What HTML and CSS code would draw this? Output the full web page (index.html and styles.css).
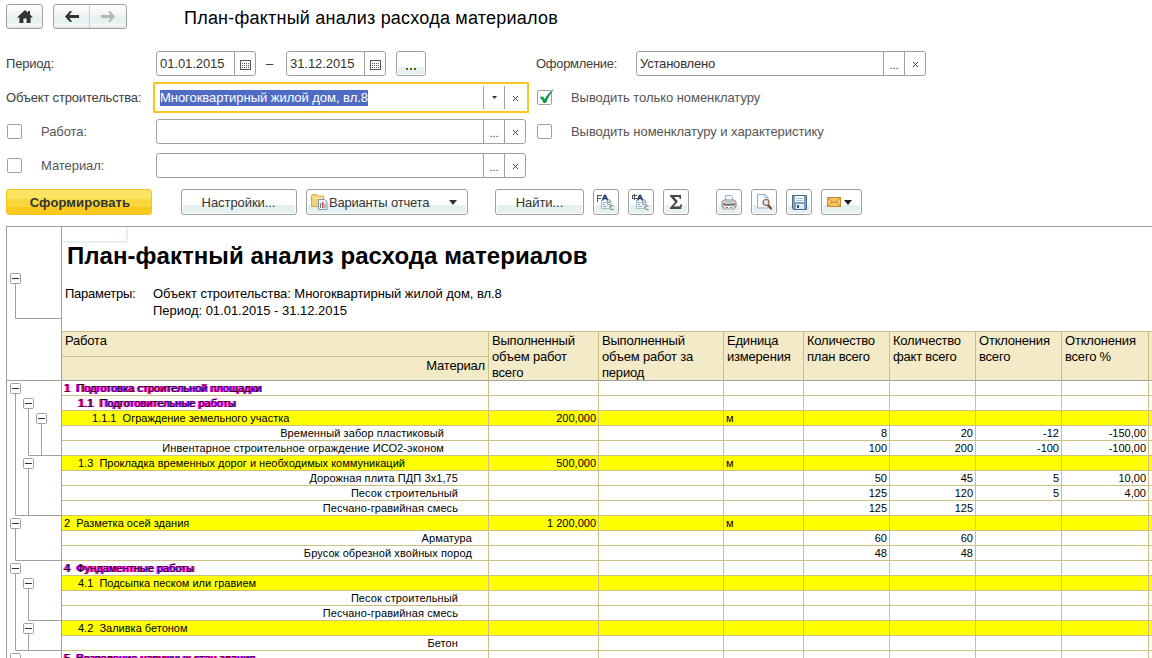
FILE: index.html
```
<!DOCTYPE html>
<html lang="ru">
  <head>
    <meta charset="UTF-8" />
    <meta name="viewport" content="width=device-width, initial-scale=1.0" />
    <title>План-фактный анализ расхода материалов</title>
    <link rel="stylesheet" href="styles.css">
  </head>
  <body>
    <header class="top">
      <div class="nav">
        <button class="nav-btn">
          <svg width="16" height="14" viewBox="0 0 16 14"><path d="M8 0 0 7.4h2.4V13h4V8.500h3.200V13h4V7.400H16L13 4.600V1h-2v1.800z" fill="#333" /></svg>
        </button>
      </div>
      <div class="nav">
        <button class="nav-btn">
          <svg width="14" height="11" viewBox="0 0 14 11"><path d="M0 5.500 5 0h2L4.500 4H14v3H4.500L7 11H5z" fill="#333" /></svg>
        </button>
        <button class="nav-btn">
          <svg width="14" height="11" viewBox="0 0 14 11"><path d="M14 5.500 9 0H7l2.500 4H0v3h9.500L7 11h2z" fill="#b5b5b5" /></svg>
        </button>
      </div>
      <h1 class="title">План-фактный анализ расхода материалов</h1>
    </header>

    <form class="filters">
      <div class="row">
        <span class="label wide">Период:</span>
        <div class="field date">
          <span class="value">01.01.2015</span>
          <span class="cell"><svg class="cal" width="11" height="10" viewBox="0 0 11 10"><rect x=".5" y=".5" width="10" height="9" fill="none" stroke="#555" /><path d="M2 3.500h7M2 5.500h7M2 7.500h7" stroke="#555" stroke-dasharray="1 1" /></svg></span>
        </div>
        <span class="dash">–</span>
        <div class="field date">
          <span class="value">31.12.2015</span>
          <span class="cell"><svg class="cal" width="11" height="10" viewBox="0 0 11 10"><rect x=".5" y=".5" width="10" height="9" fill="none" stroke="#555" /><path d="M2 3.500h7M2 5.500h7M2 7.500h7" stroke="#555" stroke-dasharray="1 1" /></svg></span>
        </div>
        <button class="btn period">
          <svg class="cal" width="10" height="2"><path d="M0 0h2v2H0zM4 0h2v2H4zM8 0h2v2H8z" fill="#6b5b00" /></svg>
        </button>
        <span class="label look">Оформление:</span>
        <div class="field appearance">
          <span class="value">Установлено</span>
          <span class="cell dots">...</span>
          <span class="cell"><svg class="x" width="5" height="5"><use href="#x" /></svg></span>
        </div>
      </div>

      <div class="row">
        <span class="label wide">Объект строительства:</span>
        <div class="field focused">
          <span class="value"><mark>Многоквартирный жилой дом, вл.8</mark></span>
          <span class="cell"><svg width="5" height="3"><path d="M0 0h5L2.500 3z" fill="#333" /></svg></span>
          <span class="cell"><svg class="x" width="5" height="5"><use href="#x" /></svg></span>
        </div>
        <span class="check right">
          <svg class="tick" width="16" height="16" viewBox="0 0 16 16"><path d="M1.500 8 5 7.500 6.500 10.200C9 6 12 2.500 16 0 12.500 4.500 10 9 8 14H5.500C4.800 12 3.500 10 1.500 8z" fill="#0a9a4c" /></svg>
        </span>
        <span class="label dim">Выводить только номенклатуру</span>
      </div>

      <div class="row">
        <span class="check"></span>
        <span class="label dim narrow">Работа:</span>
        <div class="field">
          <span class="value"></span>
          <span class="cell dots">...</span>
          <span class="cell"><svg class="x" width="5" height="5"><use href="#x" /></svg></span>
        </div>
        <span class="check right"></span>
        <span class="label dim">Выводить номенклатуру и характеристику</span>
      </div>

      <div class="row">
        <span class="check"></span>
        <span class="label dim narrow">Материал:</span>
        <div class="field">
          <span class="value"></span>
          <span class="cell dots">...</span>
          <span class="cell"><svg class="x" width="5" height="5" viewBox="0 0 5 5"><path id="x" d="M0 0h1v1H0zM4 0h1v1H4zM1 1h1v1H1zM3 1h1v1H3zM2 2h1v1H2zM1 3h1v1H1zM3 3h1v1H3zM0 4h1v1H0zM4 4h1v1H4z" fill="#444" /></svg></span>
        </div>
      </div>
    </form>

    <div class="toolbar">
      <button class="btn primary">Сформировать</button>
      <button class="btn settings">Настройки...</button>
      <button class="btn variants">
        <svg width="17" height="16" viewBox="0 0 17 16"><path d="M.5 12.500v-11l1-1h4l1 1.500h6v10.500z" fill="#f4d27c" stroke="#d9a94a" /><path d="M1.500 4h10" stroke="#fff1c0" /><path d="M7.500 5.500h6l2.500 2v8H7.500z" fill="#eef3f8" stroke="#8496ab" /><path d="M9 9h1v5H9z" fill="#5b86b8" /><path d="M11 8h1.500v6H11z" fill="#d9463b" /><path d="M13.500 10h1v4h-1z" fill="#5aa05a" /></svg>
        <span>Варианты отчета</span>
        <svg class="arrow" width="8" height="5"><path d="M0 0h8L4 5z" fill="#333" /></svg>
      </button>
      <button class="btn find">Найти...</button>
      <button class="btn icon">
        <svg width="18" height="17" viewBox="0 0 18 17"><path d="M4.500 6v8.500H12M5 4.500h6l3 3v6" fill="#e9f5fa" stroke="#9dc3d3" /><path d="M.5 1v7M0 1.500h5M0 4.500h4" fill="none" stroke="#555" /><path d="m5.500 6.500 2-5h1l2 5M6.500 4.500h3" fill="none" stroke="#173a63" stroke-width="1.500" /><path d="M10.500 6v4.500H13q1-1 0-2.200h-2.500H13q1-1 0-2.300z" fill="#fff" stroke="#929ba0" /><path d="M16.500 12q-3.500-1-3.500 1.500T16.500 15.500" fill="none" stroke="#858e93" stroke-width="1.300" /><path d="M6 8.500h3M6 10.500h2M6 12.500h4" stroke="#8fb0bf" /></svg>
      </button>
      <button class="btn icon">
        <svg width="18" height="17" viewBox="0 0 18 17"><path d="M4.500 6v8.500H12M5 4.500h6l3 3v6" fill="#e9f5fa" stroke="#9dc3d3" /><path d="M0 1.500h5M0 4.500h5M.5 1v4M2.500 0v6" fill="none" stroke="#555" /><path d="m5.500 6.500 2-5h1l2 5M6.500 4.500h3" fill="none" stroke="#173a63" stroke-width="1.500" /><path d="M10.500 6v4.500H13q1-1 0-2.200h-2.500H13q1-1 0-2.300z" fill="#fff" stroke="#929ba0" /><path d="M16.500 12q-3.500-1-3.500 1.500T16.500 15.500" fill="none" stroke="#858e93" stroke-width="1.300" /><path d="M6 8.500h3M6 10.500h2M6 12.500h4" stroke="#8fb0bf" /></svg>
      </button>
      <button class="btn icon">
        <svg width="12" height="14" viewBox="0 0 12 14"><path d="M0 0h11v4h-1L9 2H4l4 4.500L3.500 11.500H9.500L11 9h1l-.8 5H0v-1l5-6L0 1z" fill="#484848" /></svg>
      </button>
      <button class="btn icon print">
        <svg width="16" height="15" viewBox="0 0 16 15"><path d="M4.500 7V.5h6l1 1V7z" fill="#f2f8fd" stroke="#9ab4cc" /><path d="M1 6.500 3 5h10l2 1.500V11l-1.500 2.500h-11L1 11z" fill="#d6d2cd" stroke="#8b8782" /><path d="M4 5.500h8v3H4z" fill="#b9c9d9" /><path d="M2 9.500h12" stroke="#6d6d6d" /><path d="M2 8h2v1H2zM12 8h2v1h-2z" fill="#d98d5b" /><path d="M3.500 10.500h9l1 3.500h-11z" fill="#fff" stroke="#999" /><path d="M5 12h2v1H5z" fill="#c9503e" /><path d="M9 12h2v1H9z" fill="#59a" /></svg>
      </button>
      <button class="btn icon">
        <svg width="15" height="16" viewBox="0 0 15 16"><path d="M.5.500h7.500l3 3v10.500H.5z" fill="#f7fafd" stroke="#8fb0cf" /><path d="M8 .5v3h3" fill="#d5e5f2" stroke="#8fb0cf" /><path d="m11 11 3 3.500" stroke="#7d3d22" stroke-width="2" stroke-linecap="round" /><circle cx="9" cy="8.500" r="3" fill="#dbe8f2" stroke="#8a5a40" stroke-width="1.200" /></svg>
      </button>
      <button class="btn icon">
        <svg width="15" height="15" viewBox="0 0 15 15"><path d="M.5.500h14v14h-13l-1-1z" fill="#7d9fc0" stroke="#45688c" /><path d="M3 1h9v6H3z" fill="#f5fafd" /><path d="M4 3.500h7M4 5.500h7" stroke="#a9c1d4" /><path d="M4 9h8v5H4z" fill="#e3e9ee" /><path d="M5 10h2v3H5z" fill="#375a7c" /></svg>
      </button>
      <button class="btn mail">
        <svg width="14" height="10" viewBox="0 0 14 10"><rect x=".5" y=".5" width="13" height="9" fill="#fbc562" stroke="#c98a2c" /><path d="m1 1 6 5 6-5M1 9l4.500-4.500M13 9 8.500 4.500" fill="none" stroke="#c98a2c" /></svg>
        <svg width="8" height="5"><path d="M0 0h8L4 5z" fill="#222" /></svg>
      </button>
    </div>

    <main class="report">
      <!-- group outline, same coordinates as the page -->
      <svg class="outline" width="54" height="432" viewBox="7 227 54 432">
        <g fill="none" stroke="#a0a0a0">
          <path d="M15.500 284v34.500H61M7 380.500h54" />
          <path d="M15.500 393v122.500H61M28.500 408v47.500H61M41.500 423v32M28.500 468v47" />
          <path d="M15.500 528v32.500H61M15.500 573v77.500H61M28.500 588v32.500H61M28.500 633v17" />
        </g>
        <g fill="#fff" stroke="#a0a0a0">
          <rect x="10.500" y="273.500" width="10" height="10" rx="1" />
          <rect x="10.500" y="383.500" width="10" height="10" rx="1" />
          <rect x="23.500" y="398.500" width="10" height="10" rx="1" />
          <rect x="36.500" y="413.500" width="10" height="10" rx="1" />
          <rect x="23.500" y="458.500" width="10" height="10" rx="1" />
          <rect x="10.500" y="518.500" width="10" height="10" rx="1" />
          <rect x="10.500" y="563.500" width="10" height="10" rx="1" />
          <rect x="23.500" y="578.500" width="10" height="10" rx="1" />
          <rect x="23.500" y="623.500" width="10" height="10" rx="1" />
          <rect x="10.500" y="653.500" width="10" height="10" rx="1" />
        </g>
        <path d="M12 278.500h7M12 388.500h7M25 403.500h7M38 418.500h7M25 463.500h7M12 523.500h7M12 568.500h7M25 583.500h7M25 628.500h7" stroke="#333" />
      </svg>

      <div class="sheet">
        <div class="cursor"></div>
        <h2 class="report-title">План-фактный анализ расхода материалов</h2>
        <div class="params">
          <span class="params-label">Параметры:</span>
          <div>
            <div>Объект строительства: Многоквартирный жилой дом, вл.8</div>
            <div class="params-period">Период: 01.01.2015 - 31.12.2015</div>
          </div>
        </div>

        <table class="grid">
          <colgroup>
            <col class="c-name"><col class="c-total"><col class="c-period"><col class="c-unit">
            <col class="c-num"><col class="c-num"><col class="c-num"><col class="c-pct"><col class="c-rest">
          </colgroup>
          <thead>
            <tr class="h1">
              <th>Работа</th>
              <th rowspan="2">Выполненный<br>объем работ<br>всего</th>
              <th rowspan="2">Выполненный<br>объем работ за<br>период</th>
              <th rowspan="2">Единица<br>измерения</th>
              <th rowspan="2">Количество<br>план всего</th>
              <th rowspan="2">Количество<br>факт всего</th>
              <th rowspan="2">Отклонения<br>всего</th>
              <th rowspan="2">Отклонения<br>всего %</th>
              <th rowspan="2"></th>
            </tr>
            <tr class="h2"><th class="material">Материал</th></tr>
          </thead>
          <tbody>
            <tr class="group"><td>1  Подготовка строительной площадки</td><td></td><td></td><td></td><td></td><td></td><td></td><td></td><td></td></tr>
            <tr class="group l1"><td>1.1  Подготовительные работы</td><td></td><td></td><td></td><td></td><td></td><td></td><td></td><td></td></tr>
            <tr class="work l2"><td>1.1.1  Ограждение земельного участка</td><td>200,000</td><td></td><td>м</td><td></td><td></td><td></td><td></td><td></td></tr>
            <tr class="item r3"><td>Временный забор пластиковый</td><td></td><td></td><td></td><td>8</td><td>20</td><td>-12</td><td>-150,00</td><td></td></tr>
            <tr class="item r3"><td>Инвентарное строительное ограждение ИСО2-эконом</td><td></td><td></td><td></td><td>100</td><td>200</td><td>-100</td><td>-100,00</td><td></td></tr>
            <tr class="work l1"><td>1.3  Прокладка временных дорог и необходимых коммуникаций</td><td>500,000</td><td></td><td>м</td><td></td><td></td><td></td><td></td><td></td></tr>
            <tr class="item r2"><td>Дорожная плита ПДП 3х1,75</td><td></td><td></td><td></td><td>50</td><td>45</td><td>5</td><td>10,00</td><td></td></tr>
            <tr class="item r2"><td>Песок строительный</td><td></td><td></td><td></td><td>125</td><td>120</td><td>5</td><td>4,00</td><td></td></tr>
            <tr class="item r2"><td>Песчано-гравийная смесь</td><td></td><td></td><td></td><td>125</td><td>125</td><td></td><td></td><td></td></tr>
            <tr class="work"><td>2  Разметка осей здания</td><td>1 200,000</td><td></td><td>м</td><td></td><td></td><td></td><td></td><td></td></tr>
            <tr class="item r1"><td>Арматура</td><td></td><td></td><td></td><td>60</td><td>60</td><td></td><td></td><td></td></tr>
            <tr class="item r1"><td>Брусок обрезной хвойных пород</td><td></td><td></td><td></td><td>48</td><td>48</td><td></td><td></td><td></td></tr>
            <tr class="group"><td>4  Фундаментные работы</td><td></td><td></td><td></td><td></td><td></td><td></td><td></td><td></td></tr>
            <tr class="work l1"><td>4.1  Подсыпка песком или гравием</td><td></td><td></td><td></td><td></td><td></td><td></td><td></td><td></td></tr>
            <tr class="item r2"><td>Песок строительный</td><td></td><td></td><td></td><td></td><td></td><td></td><td></td><td></td></tr>
            <tr class="item r2"><td>Песчано-гравийная смесь</td><td></td><td></td><td></td><td></td><td></td><td></td><td></td><td></td></tr>
            <tr class="work l1"><td>4.2  Заливка бетоном</td><td></td><td></td><td></td><td></td><td></td><td></td><td></td><td></td></tr>
            <tr class="item r2"><td>Бетон</td><td></td><td></td><td></td><td></td><td></td><td></td><td></td><td></td></tr>
            <tr class="group"><td>5  Возведение наружных стен здания</td><td></td><td></td><td></td><td></td><td></td><td></td><td></td><td></td></tr>
          </tbody>
        </table>
      </div>
    </main>
  </body>
</html>
```
FILE: styles.css
```
:root {
  --line: #a0a0a0;
  --grid: #ccc085;
  --head: #f3ebc7;
  --tint: #e5f1f1;
}

* {
  box-sizing: border-box;
}
body {
  margin: 0;
  width: 1152px;
  height: 658px;
  overflow: hidden;
  background: #fff;
  color: #333;
  font-family: "Liberation Sans", Arial, sans-serif;
  font-size: 13px;
  letter-spacing: -0.06px;
}
svg {
  display: block;
  flex: none;
}
button {
  font: inherit;
  letter-spacing: inherit;
  color: inherit;
  padding: 0;
}

/* top line */
.top {
  display: flex;
  height: 51px;
  padding: 4px 0 0 6px;
}
.nav {
  display: flex;
  height: 25px;
  margin-right: 10px;
  border: 1px solid var(--line);
  border-radius: 3px;
  background: linear-gradient(#fff, #f0f0f0 12px, var(--tint) 12px, #e8f3f3 19px, #fff 19px, #e4e4e4);
}
.nav-btn {
  display: flex;
  align-items: center;
  justify-content: center;
  width: 35px;
  border: 0;
  background: none;
}
.nav-btn + .nav-btn {
  width: 37px;
  border-left: 1px solid #ccc;
}
.title {
  margin: 3px 0 0 47px;
  font-size: 18px;
  font-weight: normal;
  line-height: 22px;
  letter-spacing: 0.22px;
  color: #000;
}

/* filters */
.filters {
  padding-left: 6px;
}
.row {
  display: flex;
  align-items: center;
  height: 25px;
  margin-bottom: 9px;
}
.label {
  white-space: nowrap;
  color: #404040;
}
.label.wide {
  width: 150px;
  letter-spacing: -0.18px;
}
.label.dim {
  color: #555;
}
.label.narrow {
  width: 115px;
}
.label.look {
  width: 100px;
  margin-left: 110px;
  letter-spacing: -0.3px;
}
.field {
  display: flex;
  width: 370px;
  height: 25px;
  border: 1px solid var(--line);
  border-radius: 3px;
  background: #fff;
}
.field.date {
  width: 100px;
}
.field.appearance {
  width: 290px;
}
.field.focused {
  width: 376px;
  height: 31px;
  margin: 0 -3px;
  padding: 2px;
  border: 2px solid #f8c61e;
  border-radius: 0;
}
.value {
  flex: 1;
  padding-left: 3px;
  line-height: 23px;
  color: #333;
}
.appearance .value {
  letter-spacing: -0.2px;
}
mark {
  display: inline-block;
  height: 16px;
  line-height: 16px;
  background: #4f6bc4;
  color: #fff;
  letter-spacing: -0.04px;
}
.cell {
  display: flex;
  align-items: center;
  justify-content: center;
  width: 21px;
  border-left: 1px solid var(--line);
}
.cell.dots {
  padding-top: 3px;
  font-size: 11px;
  letter-spacing: 0;
}
.cell .x,
.cal {
  shape-rendering: crispEdges;
}
.cell .cal,
.cell .x {
  margin-top: 2px;
}
.dash {
  width: 30px;
  padding-right: 3px;
  text-align: center;
}
.check {
  width: 15px;
  height: 15px;
  margin: 0 19px 0 1px;
  border: 1px solid var(--line);
  border-radius: 2px;
}
.check.right {
  margin-left: 11px;
}
.tick {
  margin: -2px 0 0 0;
}

/* buttons */
.btn {
  display: flex;
  align-items: center;
  justify-content: center;
  height: 26px;
  border: 1px solid var(--line);
  border-radius: 3px;
  background: linear-gradient(#fff 15px, var(--tint) 15px);
  box-shadow: inset 0 0 0 1px #fff;
}
.btn.period {
  width: 30px;
  height: 25px;
  margin-left: 10px;
  padding-top: 10px;
}
.toolbar {
  display: flex;
  gap: 9px;
  padding: 2px 0 0 6px;
  height: 39px;
}
.btn.primary {
  width: 146px;
  margin-right: 20px;
  padding-left: 2px;
  border-color: #f6c51d;
  background: linear-gradient(#fbe565, #fae35f 9px, #f9d93f 9px, #f9d638 17px, #fac81c 17px, #fbcb22);
  box-shadow: none;
  font-weight: bold;
  letter-spacing: 0.12px;
}
.btn.settings {
  width: 116px;
  padding-right: 1px;
}
.btn.variants {
  width: 162px;
  margin-right: 18px;
  justify-content: flex-start;
  padding-left: 4px;
  letter-spacing: -0.2px;
}
.btn.variants span {
  margin-left: 1px;
}
.arrow {
  margin: 0 10px 0 auto;
}
.btn.find {
  width: 89px;
}
.btn.icon {
  width: 26px;
}
.btn.print {
  margin-left: 18px;
}
.btn.mail {
  width: 41px;
  gap: 3px;
  padding-right: 4px;
}

/* report */
.report {
  display: flex;
  width: 1146px;
  height: 432px;
  margin-left: 6px;
  border-top: 1px solid var(--line);
  border-left: 1px solid var(--line);
  overflow: hidden;
  color: #000;
}
.sheet {
  width: 1091px;
  border-left: 1px solid var(--line);
  overflow: hidden;
}
.cursor {
  width: 66px;
  height: 16px;
  border-right: 2px solid var(--tint);
  border-bottom: 2px solid var(--tint);
}
.report-title {
  margin: -1px 0 0 5px;
  font-size: 24px;
  line-height: 28px;
  letter-spacing: 0.04px;
}
.params {
  display: flex;
  height: 61px;
  padding: 15px 0 0 3px;
  line-height: 17px;
}
.params-label {
  width: 88px;
  letter-spacing: -0.25px;
}
.params-period {
  letter-spacing: -0.02px;
}

.grid {
  width: 1091px;
  table-layout: fixed;
  border-collapse: separate;
  border-spacing: 0;
  border-top: 1px solid var(--grid);
}
.c-name { width: 427px; }
.c-total { width: 110px; }
.c-period { width: 125px; }
.c-unit { width: 80px; }
.c-num { width: 86px; }
.c-pct { width: 87px; }
.c-rest { width: 4px; }

/* the third line of a heading ends right at the border */
th {
  padding: 1px 0 0 3px;
  border-right: 1px solid var(--grid);
  border-bottom: 1px solid var(--line);
  background: var(--head);
  font-weight: normal;
  line-height: 15.8px;
  letter-spacing: -0.2px;
  text-align: left;
  vertical-align: top;
  white-space: nowrap;
}
.h1 {
  height: 25px;
}
.h1 th:first-child {
  border-bottom-color: var(--grid);
}
.h2 {
  height: 24px;
}
th.material {
  padding: 1px 3px 0 0;
  text-align: right;
}
td {
  height: 15px;
  padding: 0 2px 0 0;
  border-right: 1px solid var(--grid);
  border-bottom: 1px solid var(--grid);
  font-size: 11px;
  line-height: 14px;
  letter-spacing: 0;
  text-align: right;
  white-space: pre;
}
th:last-child:not(.material),
td:last-child {
  padding: 0;
  border-right: 0;
}
td:nth-child(4) {
  padding-left: 2px;
  text-align: left;
}
.group td:first-child,
.work td:first-child {
  padding-left: 2px;
  text-align: left;
}
.group td:first-child {
  text-shadow: 1px 0 #f0f, 1px 0 #f0f, -1px 0 #f0f;
}
.group.l1 td:first-child,
.work.l1 td:first-child {
  padding-left: 16px;
}
.work.l2 td:first-child {
  padding-left: 30px;
}
.work td {
  background: #ff0;
}
.item td:first-child {
  letter-spacing: 0.09px;
}
.r1 td:first-child { padding-right: 16px; }
.r2 td:first-child { padding-right: 30px; }
.r3 td:first-child { padding-right: 44px; }
```
